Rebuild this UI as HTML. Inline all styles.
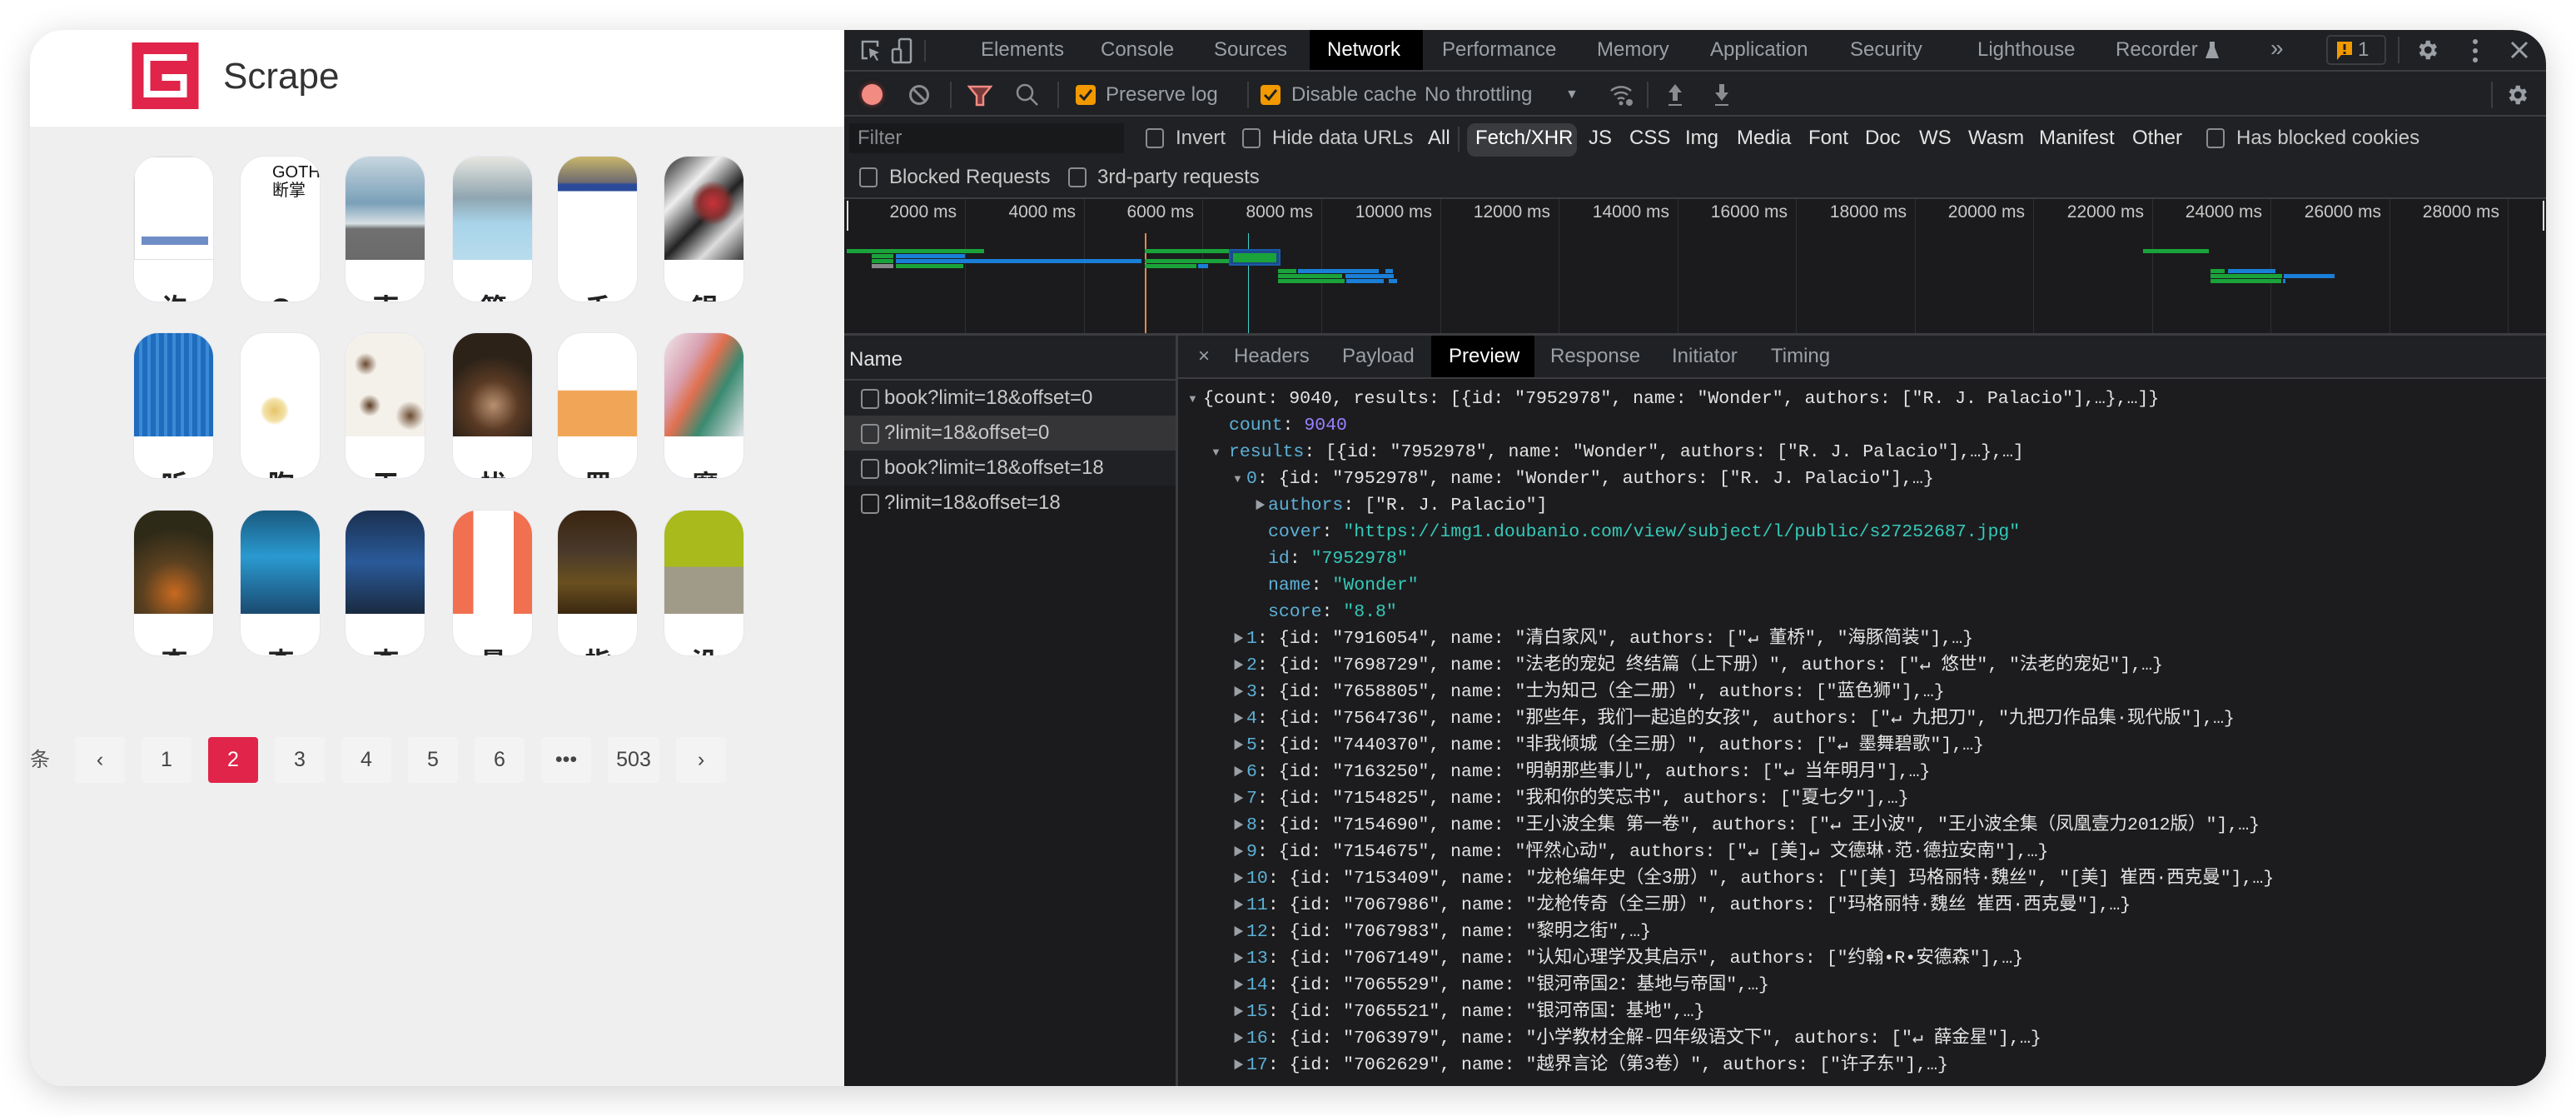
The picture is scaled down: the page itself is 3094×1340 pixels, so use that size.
<!DOCTYPE html>
<html><head><meta charset="utf-8">
<style>
*{margin:0;padding:0;box-sizing:border-box}
body{width:3094px;height:1340px;background:#fff;position:relative;overflow:hidden;font-family:"Liberation Sans","Noto Sans CJK SC",sans-serif}
.a{position:absolute}
.win{position:absolute;left:36px;top:36px;width:3022px;height:1268px;border-radius:40px;overflow:hidden;box-shadow:0 8px 40px rgba(0,0,0,.18);background:#efefef}
.left{position:absolute;left:0;top:0;width:978px;height:1268px;background:#efeff0}
.hdr{position:absolute;left:0;top:0;width:978px;height:116px;background:#fff}
.card{position:absolute;width:97px;height:176px;background:#fff;border-radius:30px;overflow:hidden;border:1px solid #e6e6ee}
.cov{position:absolute;left:0;top:0;width:97px;height:124px}
.lab{position:absolute;left:0;width:97px;top:162px;text-align:center;font-size:32px;font-weight:bold;color:#222;line-height:40px}
.pg{position:absolute;top:849px;width:60px;height:55px;background:#f3f3f4;border-radius:4px;text-align:center;line-height:55px;font-size:25px;color:#444}
.dt{position:absolute;left:978px;top:0;width:2044px;height:1268px;background:#202124;color:#e3e3e3;font-size:24px;border-top-right-radius:40px}
.t{position:absolute;line-height:32px;white-space:nowrap}
.g{color:#9aa0a6}
.sep{position:absolute;background:#3c3d40}
.cb{position:absolute;width:22px;height:24px;border:2px solid #8a8c90;border-radius:4px}
.grid{position:absolute;top:0;width:1px;height:161px;background:#2e2f32}
.tl{position:absolute;top:4px;font-size:21px;color:#c8c8c8;text-align:right;width:130px}
.bar{position:absolute;height:5px}
.gr{background:#1aa33a}.bl{background:#1a7fd6}
.pv{position:absolute;font-family:"Liberation Mono","Noto Sans CJK SC",monospace;font-size:21.5px;line-height:32px;white-space:nowrap;color:#e3e3e3}
.k{color:#5db0d7}.s{color:#35c9b8}.n{color:#9980ff}
.tri{color:#9aa0a6;font-size:13px;line-height:32px;position:absolute}
</style></head><body>
<div class="win">
 <div class="left">
  <div class="hdr">
   <svg class="a" style="left:122px;top:15px" width="81" height="80" viewBox="0 0 80 80"><rect width="80" height="80" fill="#e0244a"/><path d="M14 14H66V22H22V58H58V46H36V38H66V66H14Z" fill="#fff"/></svg>
   <div class="a" style="left:232px;top:29px;font-size:44px;line-height:54px;color:#333">Scrape</div>
  </div>
  <div class="card" style="left:124px;top:151px"><div class="cov" style="background:#fff;border:1px solid #ddd"><div class="a" style="left:8px;top:95px;width:80px;height:10px;background:#4b70b8;opacity:.8"></div></div><div class="lab">许</div></div>
  <div class="card" style="left:252px;top:151px"><div class="cov" style="background:#fff"><div class="a" style="left:38px;top:8px;font-size:20px;line-height:22px;color:#111;width:50px">GOTH<br>断掌</div></div><div class="lab">G</div></div>
  <div class="card" style="left:378px;top:151px"><div class="cov" style="background:linear-gradient(#c7d6df,#7aa0b8 45%,#d8e0e4 65%,#707070 70%,#6a6a6a)"></div><div class="lab">南</div></div>
  <div class="card" style="left:507px;top:151px"><div class="cov" style="background:linear-gradient(#e6e6e0,#8fa5b0 40%,#a8d4ea 65%,#b8dcec)"></div><div class="lab">第</div></div>
  <div class="card" style="left:633px;top:151px"><div class="cov" style="background:linear-gradient(#c9b66a,#6d6a70 25%,#2b4a9a 27%,#2b4a9a 33%,#fff 34%)"></div><div class="lab">千</div></div>
  <div class="card" style="left:761px;top:151px"><div class="cov" style="background:radial-gradient(circle at 60% 45%,#c8323a 0,#8a3030 18%,transparent 30%),linear-gradient(135deg,#222 0,#eee 30%,#222 55%,#ddd 75%,#333)"></div><div class="lab">银</div></div>
  <div class="card" style="left:124px;top:363px"><div class="cov" style="background:repeating-linear-gradient(90deg,#1f6bbd 0 6px,#3a8ad6 6px 10px)"></div><div class="lab">听</div></div>
  <div class="card" style="left:252px;top:363px"><div class="cov" style="background:radial-gradient(circle at 42% 75%,#e6c46a 0,#f3e2a8 12%,#fff 16%)"></div><div class="lab">胸</div></div>
  <div class="card" style="left:378px;top:363px"><div class="cov" style="background:radial-gradient(circle at 25% 30%,#6b4a30 0,transparent 12%),radial-gradient(circle at 80% 80%,#6b4a30 0,transparent 14%),radial-gradient(circle at 30% 70%,#5a3a22 0,transparent 12%),#f4f1ea"></div><div class="lab">天</div></div>
  <div class="card" style="left:507px;top:363px"><div class="cov" style="background:radial-gradient(circle at 50% 70%,#b89070 0,#5a3a24 30%,#2c2218 60%)"></div><div class="lab">忧</div></div>
  <div class="card" style="left:633px;top:363px"><div class="cov" style="background:linear-gradient(#fff 55%,#f0a656 56%)"></div><div class="lab">罗</div></div>
  <div class="card" style="left:761px;top:363px"><div class="cov" style="background:linear-gradient(120deg,#f0e6ea,#d8a0b0 30%,#e07050 45%,#3a8a70 65%,#e8e8ec)"></div><div class="lab">魔</div></div>
  <div class="card" style="left:124px;top:576px"><div class="cov" style="background:radial-gradient(circle at 50% 80%,#c86a20 0,#5a4020 35%,#2e2a18 70%)"></div><div class="lab">查</div></div>
  <div class="card" style="left:252px;top:576px"><div class="cov" style="background:linear-gradient(#1a5a80,#2a9ad0 45%,#1a4a70)"></div><div class="lab">查</div></div>
  <div class="card" style="left:378px;top:576px"><div class="cov" style="background:linear-gradient(#1a3050,#2a5a9a 50%,#1a2a40)"></div><div class="lab">查</div></div>
  <div class="card" style="left:507px;top:576px"><div class="cov" style="background:linear-gradient(90deg,#f07050 0 25%,#fff 25% 75%,#f07050 75%)"></div><div class="lab">最</div></div>
  <div class="card" style="left:633px;top:576px"><div class="cov" style="background:linear-gradient(#3a2410,#4a3a2a 40%,#6a5020 70%,#3a2810)"></div><div class="lab">指</div></div>
  <div class="card" style="left:761px;top:576px"><div class="cov" style="background:linear-gradient(#a8ba1c 0 54%,#a09a88 55%)"></div><div class="lab">没</div></div>
  <div class="a" style="left:0;top:849px;line-height:55px;font-size:24px;color:#555">条</div>
  <div class="pg" style="left:54px">&#8249;</div>
  <div class="pg" style="left:134px">1</div>
  <div class="pg" style="left:214px;background:#e0244a;color:#fff">2</div>
  <div class="pg" style="left:294px">3</div>
  <div class="pg" style="left:374px">4</div>
  <div class="pg" style="left:454px">5</div>
  <div class="pg" style="left:534px">6</div>
  <div class="pg" style="left:614px">&#8226;&#8226;&#8226;</div>
  <div class="pg" style="left:694px;width:62px">503</div>
  <div class="pg" style="left:776px">&#8250;</div>
 </div>

 <div class="dt">
  <div class="sep" style="left:0;top:48px;width:2044px;height:2px"></div>
  <svg class="a" style="left:18px;top:10px" width="28" height="30" viewBox="0 0 28 30"><path d="M10 24H4V4H22V10" stroke="#9aa0a6" stroke-width="2.5" fill="none"/><path d="M12 12L24 17L19 19L23 26L21 27L17 20L13 24Z" fill="#9aa0a6"/></svg>
  <svg class="a" style="left:56px;top:9px" width="26" height="32" viewBox="0 0 26 32"><rect x="10" y="2" width="14" height="28" rx="2" stroke="#9aa0a6" stroke-width="2.5" fill="none"/><rect x="2" y="14" width="10" height="16" rx="2" stroke="#9aa0a6" stroke-width="2.5" fill="#202124"/></svg>
  <div class="sep" style="left:96px;top:12px;width:2px;height:26px"></div>
  <div class="t g" style="left:164px;top:8px">Elements</div>
  <div class="t g" style="left:308px;top:8px">Console</div>
  <div class="t g" style="left:444px;top:8px">Sources</div>
  <div class="a" style="left:559px;top:0;width:136px;height:48px;background:#000"></div>
  <div class="t" style="left:580px;top:8px;color:#fff">Network</div>
  <div class="t g" style="left:718px;top:8px">Performance</div>
  <div class="t g" style="left:904px;top:8px">Memory</div>
  <div class="t g" style="left:1040px;top:8px">Application</div>
  <div class="t g" style="left:1208px;top:8px">Security</div>
  <div class="t g" style="left:1361px;top:8px">Lighthouse</div>
  <div class="t g" style="left:1527px;top:8px">Recorder</div>
  <svg class="a" style="left:1634px;top:13px" width="18" height="22" viewBox="0 0 18 22"><path d="M6 1H12V8L17 21H1L6 8Z" fill="#9aa0a6"/></svg>
  <div class="t g" style="left:1713px;top:6px;font-size:28px">&#187;</div>
  <div class="a" style="left:1780px;top:6px;width:72px;height:36px;border:2px solid #3c3d40;border-radius:5px"></div>
  <svg class="a" style="left:1791px;top:13px" width="22" height="24" viewBox="0 0 22 24"><path d="M2 1H20V17H7L2 23Z" fill="#f29900"/><rect x="9.5" y="4" width="3" height="7" fill="#202124"/><rect x="9.5" y="13" width="3" height="3" fill="#202124"/></svg>
  <div class="t g" style="left:1818px;top:8px;font-size:24px">1</div>
  <div class="sep" style="left:1866px;top:8px;width:2px;height:32px"></div>
  <svg class="a" style="left:1886px;top:9px" width="30" height="30" viewBox="0 0 24 24"><path fill="#9aa0a6" d="M19.4 13a7.5 7.5 0 0 0 0-2l2.1-1.6-2-3.5-2.5 1a7 7 0 0 0-1.7-1L15 3h-4l-.4 2.9a7 7 0 0 0-1.7 1l-2.5-1-2 3.5L6.6 11a7.5 7.5 0 0 0 0 2l-2.1 1.6 2 3.5 2.5-1a7 7 0 0 0 1.7 1L11 21h4l.4-2.9a7 7 0 0 0 1.7-1l2.5 1 2-3.5zM13 15.5a3.5 3.5 0 1 1 0-7 3.5 3.5 0 0 1 0 7z"/></svg>
  <svg class="a" style="left:1955px;top:10px" width="8" height="30" viewBox="0 0 8 30"><circle cx="4" cy="4" r="3" fill="#9aa0a6"/><circle cx="4" cy="15" r="3" fill="#9aa0a6"/><circle cx="4" cy="26" r="3" fill="#9aa0a6"/></svg>
  <svg class="a" style="left:2001px;top:13px" width="22" height="22" viewBox="0 0 22 22"><path d="M2 2L20 20M20 2L2 20" stroke="#9aa0a6" stroke-width="3"/></svg>

  <div class="sep" style="left:0;top:102px;width:2044px;height:2px"></div>
  <div class="a" style="left:21px;top:65px;width:25px;height:25px;border-radius:50%;background:#f28b82;box-shadow:0 0 6px #a03a3a"></div>
  <svg class="a" style="left:77px;top:65px" width="26" height="26" viewBox="0 0 26 26"><circle cx="13" cy="13" r="10.5" stroke="#8a8c90" stroke-width="3" fill="none"/><path d="M6 6L20 20" stroke="#8a8c90" stroke-width="3"/></svg>
  <div class="sep" style="left:127px;top:62px;width:2px;height:32px"></div>
  <svg class="a" style="left:148px;top:66px" width="30" height="26" viewBox="0 0 30 26"><path d="M2 2H28L19 13V24H11V13Z" stroke="#f28b82" stroke-width="2.5" fill="#7a3a3a"/></svg>
  <svg class="a" style="left:205px;top:63px" width="30" height="30" viewBox="0 0 30 30"><circle cx="12" cy="12" r="9" stroke="#8a8c90" stroke-width="2.5" fill="none"/><path d="M18.5 18.5L27 27" stroke="#8a8c90" stroke-width="2.5"/></svg>
  <div class="sep" style="left:256px;top:62px;width:2px;height:32px"></div>
  <div class="a" style="left:278px;top:66px;width:24px;height:24px;background:#f29900;border-radius:4px"></div>
  <svg class="a" style="left:281px;top:70px" width="18" height="16" viewBox="0 0 18 16"><path d="M2 8L7 13L16 2" stroke="#202124" stroke-width="3" fill="none"/></svg>
  <div class="t g" style="left:314px;top:62px">Preserve log</div>
  <div class="sep" style="left:484px;top:62px;width:2px;height:32px"></div>
  <div class="a" style="left:500px;top:66px;width:24px;height:24px;background:#f29900;border-radius:4px"></div>
  <svg class="a" style="left:503px;top:70px" width="18" height="16" viewBox="0 0 18 16"><path d="M2 8L7 13L16 2" stroke="#202124" stroke-width="3" fill="none"/></svg>
  <div class="t g" style="left:537px;top:62px">Disable cache</div>
  <div class="t g" style="left:697px;top:62px">No throttling</div>
  <div class="t g" style="left:866px;top:62px;font-size:16px">&#9660;</div>
  <svg class="a" style="left:918px;top:63px" width="32" height="30" viewBox="0 0 32 30"><path d="M3 10A18 18 0 0 1 27 10M7 15A12 12 0 0 1 23 15M11 20A6 6 0 0 1 19 20" stroke="#8a8c90" stroke-width="2.5" fill="none"/><circle cx="15" cy="25" r="2.5" fill="#8a8c90"/><circle cx="25" cy="24" r="4" fill="#8a8c90"/></svg>
  <div class="sep" style="left:964px;top:62px;width:2px;height:32px"></div>
  <svg class="a" style="left:987px;top:63px" width="22" height="30" viewBox="0 0 22 30"><path d="M11 2L19 12H14V22H8V12H3Z" fill="#8a8c90"/><rect x="3" y="26" width="16" height="2" fill="#8a8c90"/></svg>
  <svg class="a" style="left:1043px;top:63px" width="22" height="30" viewBox="0 0 22 30"><path d="M11 22L19 12H14V2H8V12H3Z" fill="#8a8c90"/><rect x="3" y="26" width="16" height="2" fill="#8a8c90"/></svg>
  <div class="sep" style="left:1978px;top:62px;width:2px;height:32px"></div>
  <svg class="a" style="left:1994px;top:63px" width="30" height="30" viewBox="0 0 24 24"><path fill="#9aa0a6" d="M19.4 13a7.5 7.5 0 0 0 0-2l2.1-1.6-2-3.5-2.5 1a7 7 0 0 0-1.7-1L15 3h-4l-.4 2.9a7 7 0 0 0-1.7 1l-2.5-1-2 3.5L6.6 11a7.5 7.5 0 0 0 0 2l-2.1 1.6 2 3.5 2.5-1a7 7 0 0 0 1.7 1L11 21h4l.4-2.9a7 7 0 0 0 1.7-1l2.5 1 2-3.5zM13 15.5a3.5 3.5 0 1 1 0-7 3.5 3.5 0 0 1 0 7z"/></svg>

  <div class="a" style="left:6px;top:112px;width:330px;height:36px;background:#18191b"></div>
  <div class="t" style="left:16px;top:114px;color:#8a8c90">Filter</div>
  <div class="cb" style="left:362px;top:118px"></div><div class="t" style="left:398px;top:114px;color:#c8c8c8">Invert</div>
  <div class="cb" style="left:478px;top:118px"></div><div class="t" style="left:514px;top:114px;color:#c8c8c8">Hide data URLs</div>
  <div class="t" style="left:701px;top:114px;color:#e3e3e3">All</div>
  <div class="sep" style="left:737px;top:116px;width:2px;height:30px"></div>
  <div class="a" style="left:748px;top:112px;width:132px;height:40px;background:#3a3b3e;border-radius:10px"></div>
  <div class="t" style="left:758px;top:114px;color:#fff">Fetch/XHR</div>
  <div class="t" style="left:894px;top:114px">JS</div>
  <div class="t" style="left:943px;top:114px">CSS</div>
  <div class="t" style="left:1010px;top:114px">Img</div>
  <div class="t" style="left:1072px;top:114px">Media</div>
  <div class="t" style="left:1158px;top:114px">Font</div>
  <div class="t" style="left:1226px;top:114px">Doc</div>
  <div class="t" style="left:1291px;top:114px">WS</div>
  <div class="t" style="left:1350px;top:114px">Wasm</div>
  <div class="t" style="left:1435px;top:114px">Manifest</div>
  <div class="t" style="left:1547px;top:114px">Other</div>
  <div class="cb" style="left:1636px;top:118px"></div><div class="t" style="left:1672px;top:114px;color:#c8c8c8">Has blocked cookies</div>
  <div class="cb" style="left:18px;top:165px"></div><div class="t" style="left:54px;top:161px;color:#c8c8c8">Blocked Requests</div>
  <div class="cb" style="left:269px;top:165px"></div><div class="t" style="left:304px;top:161px;color:#c8c8c8">3rd-party requests</div>
  <div class="sep" style="left:0;top:201px;width:2044px;height:2px"></div>

  <div class="a" style="left:0;top:203px;width:2044px;height:161px;background:#1b1b1d">
   <div class="a" style="left:3px;top:2px;width:2px;height:36px;background:#ddd"></div>
   <div class="grid" style="left:145px"></div><div class="tl" style="left:5px">2000 ms</div>
   <div class="grid" style="left:288px"></div><div class="tl" style="left:148px">4000 ms</div>
   <div class="grid" style="left:430px"></div><div class="tl" style="left:290px">6000 ms</div>
   <div class="grid" style="left:573px"></div><div class="tl" style="left:433px">8000 ms</div>
   <div class="grid" style="left:716px"></div><div class="tl" style="left:576px">10000 ms</div>
   <div class="grid" style="left:858px"></div><div class="tl" style="left:718px">12000 ms</div>
   <div class="grid" style="left:1001px"></div><div class="tl" style="left:861px">14000 ms</div>
   <div class="grid" style="left:1143px"></div><div class="tl" style="left:1003px">16000 ms</div>
   <div class="grid" style="left:1286px"></div><div class="tl" style="left:1146px">18000 ms</div>
   <div class="grid" style="left:1428px"></div><div class="tl" style="left:1288px">20000 ms</div>
   <div class="grid" style="left:1571px"></div><div class="tl" style="left:1431px">22000 ms</div>
   <div class="grid" style="left:1713px"></div><div class="tl" style="left:1573px">24000 ms</div>
   <div class="grid" style="left:1856px"></div><div class="tl" style="left:1716px">26000 ms</div>
   <div class="grid" style="left:1998px"></div><div class="tl" style="left:1858px">28000 ms</div>
   <div class="a" style="left:2040px;top:2px;width:2px;height:36px;background:#ddd"></div>
   <div class="a" style="left:361px;top:41px;width:2px;height:120px;background:#e08850"></div>
   <div class="a" style="left:485px;top:41px;width:1px;height:120px;background:#3fd0d0"></div>
   <div class="bar gr" style="left:3px;top:60px;width:165px"></div>
   <div class="bar gr" style="left:33px;top:66px;width:26px"></div><div class="bar bl" style="left:62px;top:66px;width:83px"></div>
   <div class="bar gr" style="left:33px;top:72px;width:26px"></div><div class="bar bl" style="left:62px;top:72px;width:295px"></div>
   <div class="bar" style="left:33px;top:78px;width:26px;background:#888"></div><div class="bar gr" style="left:62px;top:78px;width:81px"></div>
   <div class="bar gr" style="left:361px;top:60px;width:103px"></div><div class="bar bl" style="left:466px;top:60px;width:52px"></div>
   <div class="bar gr" style="left:361px;top:72px;width:102px"></div>
   <div class="bar gr" style="left:361px;top:78px;width:62px"></div><div class="bar bl" style="left:425px;top:78px;width:12px"></div>
   <div class="a" style="left:462px;top:60px;width:62px;height:20px;background:#1a4a8a;border:2px solid #1a5aa8"><div class="a" style="left:3px;top:3px;width:52px;height:11px;background:#1aa33a"></div></div>
   <div class="bar gr" style="left:521px;top:84px;width:22px"></div><div class="bar bl" style="left:545px;top:84px;width:97px"></div><div class="bar bl" style="left:650px;top:84px;width:9px"></div>
   <div class="bar gr" style="left:521px;top:90px;width:77px"></div><div class="bar bl" style="left:602px;top:90px;width:58px"></div>
   <div class="bar gr" style="left:521px;top:96px;width:80px"></div><div class="bar bl" style="left:603px;top:96px;width:45px"></div><div class="bar bl" style="left:654px;top:96px;width:10px"></div>
   <div class="bar gr" style="left:1560px;top:60px;width:79px"></div>
   <div class="bar gr" style="left:1641px;top:84px;width:17px"></div><div class="bar bl" style="left:1662px;top:84px;width:57px"></div>
   <div class="bar gr" style="left:1641px;top:90px;width:86px"></div><div class="bar bl" style="left:1729px;top:90px;width:61px"></div>
   <div class="bar gr" style="left:1641px;top:96px;width:85px"></div><div class="bar bl" style="left:1728px;top:96px;width:3px"></div>
  </div>
  <div class="sep" style="left:0;top:364px;width:2044px;height:3px"></div>

  <div class="a" style="left:0;top:367px;width:398px;height:901px;background:#1b1b1d"></div>
  <div class="a" style="left:0;top:367px;width:398px;height:52px;background:#202124"></div>
  <div class="t" style="left:6px;top:380px;color:#e3e3e3">Name</div>
  <div class="sep" style="left:0;top:419px;width:398px;height:2px"></div>
  <div class="a" style="left:0;top:421px;width:398px;height:42px;background:#202124"></div>
  <div class="a" style="left:0;top:463px;width:398px;height:42px;background:#353538"></div>
  <div class="a" style="left:0;top:505px;width:398px;height:42px;background:#202124"></div>
  <div class="cb" style="left:20px;top:431px"></div><div class="t" style="left:48px;top:426px;color:#c8c8c8">book?limit=18&amp;offset=0</div>
  <div class="cb" style="left:20px;top:473px"></div><div class="t" style="left:48px;top:468px;color:#c8c8c8">?limit=18&amp;offset=0</div>
  <div class="cb" style="left:20px;top:515px"></div><div class="t" style="left:48px;top:510px;color:#c8c8c8">book?limit=18&amp;offset=18</div>
  <div class="cb" style="left:20px;top:557px"></div><div class="t" style="left:48px;top:552px;color:#c8c8c8">?limit=18&amp;offset=18</div>
  <div class="sep" style="left:398px;top:367px;width:3px;height:901px"></div>

  <div class="a" style="left:401px;top:367px;width:1643px;height:901px;background:#1c1c1e"></div>
  <div class="a" style="left:401px;top:367px;width:1643px;height:50px;background:#202124"></div>
  <div class="sep" style="left:401px;top:417px;width:1643px;height:2px"></div>
  <div class="t g" style="left:425px;top:376px">&#215;</div>
  <div class="t g" style="left:468px;top:376px">Headers</div>
  <div class="t g" style="left:598px;top:376px">Payload</div>
  <div class="a" style="left:705px;top:367px;width:124px;height:50px;background:#000"></div>
  <div class="t" style="left:726px;top:376px;color:#fff">Preview</div>
  <div class="t g" style="left:848px;top:376px">Response</div>
  <div class="t g" style="left:994px;top:376px">Initiator</div>
  <div class="t g" style="left:1113px;top:376px">Timing</div>

  <div class="a" style="left:0;top:0">
   <span class="tri" style="left:412px;top:427px">&#9660;</span>
   <div class="pv" style="left:431px;top:427px">{count: 9040, results: [{id: "7952978", name: "Wonder", authors: ["R. J. Palacio"],…},…]}</div>
   <div class="pv" style="left:462px;top:459px"><span class="k">count</span>: <span class="n">9040</span></div>
   <span class="tri" style="left:440px;top:491px">&#9660;</span>
   <div class="pv" style="left:462px;top:491px"><span class="k">results</span>: [{id: "7952978", name: "Wonder", authors: ["R. J. Palacio"],…},…]</div>
   <span class="tri" style="left:466px;top:523px">&#9660;</span>
   <div class="pv" style="left:483px;top:523px"><span class="k">0</span>: {id: "7952978", name: "Wonder", authors: ["R. J. Palacio"],…}</div>
   <span class="tri" style="left:493px;top:555px">&#9654;</span>
   <div class="pv" style="left:509px;top:555px"><span class="k">authors</span>: ["R. J. Palacio"]</div>
   <div class="pv" style="left:509px;top:587px"><span class="k">cover</span>: <span class="s">"https://img1.doubanio.com/view/subject/l/public/s27252687.jpg"</span></div>
   <div class="pv" style="left:509px;top:619px"><span class="k">id</span>: <span class="s">"7952978"</span></div>
   <div class="pv" style="left:509px;top:651px"><span class="k">name</span>: <span class="s">"Wonder"</span></div>
   <div class="pv" style="left:509px;top:683px"><span class="k">score</span>: <span class="s">"8.8"</span></div>
  </div>
  <div class="a" style="left:0;top:715px">
   <span class="tri" style="left:467px;top:0">&#9654;</span><div class="pv" style="left:483px;top:0"><span class="k">1</span>: {id: "7916054", name: "清白家风", authors: ["↵ 董桥", "海豚简装"],…}</div>
   <span class="tri" style="left:467px;top:32px">&#9654;</span><div class="pv" style="left:483px;top:32px"><span class="k">2</span>: {id: "7698729", name: "法老的宠妃 终结篇（上下册）", authors: ["↵ 悠世", "法老的宠妃"],…}</div>
   <span class="tri" style="left:467px;top:64px">&#9654;</span><div class="pv" style="left:483px;top:64px"><span class="k">3</span>: {id: "7658805", name: "士为知己（全二册）", authors: ["蓝色狮"],…}</div>
   <span class="tri" style="left:467px;top:96px">&#9654;</span><div class="pv" style="left:483px;top:96px"><span class="k">4</span>: {id: "7564736", name: "那些年，我们一起追的女孩", authors: ["↵ 九把刀", "九把刀作品集·现代版"],…}</div>
   <span class="tri" style="left:467px;top:128px">&#9654;</span><div class="pv" style="left:483px;top:128px"><span class="k">5</span>: {id: "7440370", name: "非我倾城（全三册）", authors: ["↵ 墨舞碧歌"],…}</div>
   <span class="tri" style="left:467px;top:160px">&#9654;</span><div class="pv" style="left:483px;top:160px"><span class="k">6</span>: {id: "7163250", name: "明朝那些事儿", authors: ["↵ 当年明月"],…}</div>
   <span class="tri" style="left:467px;top:192px">&#9654;</span><div class="pv" style="left:483px;top:192px"><span class="k">7</span>: {id: "7154825", name: "我和你的笑忘书", authors: ["夏七夕"],…}</div>
   <span class="tri" style="left:467px;top:224px">&#9654;</span><div class="pv" style="left:483px;top:224px"><span class="k">8</span>: {id: "7154690", name: "王小波全集 第一卷", authors: ["↵ 王小波", "王小波全集（凤凰壹力2012版）"],…}</div>
   <span class="tri" style="left:467px;top:256px">&#9654;</span><div class="pv" style="left:483px;top:256px"><span class="k">9</span>: {id: "7154675", name: "怦然心动", authors: ["↵ [美]↵ 文德琳·范·德拉安南"],…}</div>
   <span class="tri" style="left:467px;top:288px">&#9654;</span><div class="pv" style="left:483px;top:288px"><span class="k">10</span>: {id: "7153409", name: "龙枪编年史（全3册）", authors: ["[美] 玛格丽特·魏丝", "[美] 崔西·西克曼"],…}</div>
   <span class="tri" style="left:467px;top:320px">&#9654;</span><div class="pv" style="left:483px;top:320px"><span class="k">11</span>: {id: "7067986", name: "龙枪传奇（全三册）", authors: ["玛格丽特·魏丝 崔西·西克曼"],…}</div>
   <span class="tri" style="left:467px;top:352px">&#9654;</span><div class="pv" style="left:483px;top:352px"><span class="k">12</span>: {id: "7067983", name: "黎明之街",…}</div>
   <span class="tri" style="left:467px;top:384px">&#9654;</span><div class="pv" style="left:483px;top:384px"><span class="k">13</span>: {id: "7067149", name: "认知心理学及其启示", authors: ["约翰•R•安德森"],…}</div>
   <span class="tri" style="left:467px;top:416px">&#9654;</span><div class="pv" style="left:483px;top:416px"><span class="k">14</span>: {id: "7065529", name: "银河帝国2：基地与帝国",…}</div>
   <span class="tri" style="left:467px;top:448px">&#9654;</span><div class="pv" style="left:483px;top:448px"><span class="k">15</span>: {id: "7065521", name: "银河帝国：基地",…}</div>
   <span class="tri" style="left:467px;top:480px">&#9654;</span><div class="pv" style="left:483px;top:480px"><span class="k">16</span>: {id: "7063979", name: "小学教材全解-四年级语文下", authors: ["↵ 薛金星"],…}</div>
   <span class="tri" style="left:467px;top:512px">&#9654;</span><div class="pv" style="left:483px;top:512px"><span class="k">17</span>: {id: "7062629", name: "越界言论（第3卷）", authors: ["许子东"],…}</div>
  </div>
 </div>
</div>
</body></html>
